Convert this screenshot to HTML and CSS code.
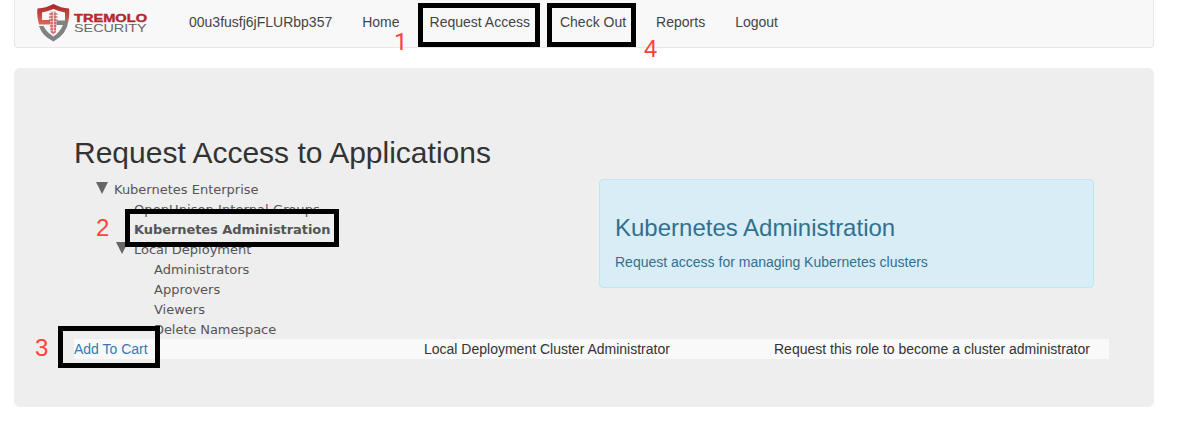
FILE: index.html
```html
<!DOCTYPE html>
<html lang="en">
<head>
<meta charset="utf-8">
<title>Request Access</title>
<link rel="stylesheet" href="styles.css">
</head>
<body>
<nav class="navbar">
  <a class="brand">
    <svg class="logo" width="112" height="42" viewBox="0 0 112 42">
      <defs>
        <linearGradient id="red" x1="0" y1="0" x2="0" y2="1"><stop offset="0" stop-color="#a8242a"/><stop offset="1" stop-color="#d96a55"/></linearGradient>
      </defs>
      <path d="M.5 5.500Q9 5 16.500 1Q24 5 32 5.500Q33 12 31 19H28V9.500Q22 8.500 16.500 6Q11 8.500 5 9.500V17H13V21.500H2Q-.5 13 .5 5.500Z" fill="url(#red)"/>
      <path d="M2 23H6.500Q9.500 29 16.500 33.500Q23 29 26 22H19.500V17.500H31.500Q30 31 16.500 38.500Q5 33 2 23Z" fill="#808284"/>
      <path d="M13.500 8.500H19V29L16.400 32L13.500 29Z" fill="#e6a59f"/>
      <path d="M12 11H20.500M12 14H20.500M12 17H20.500M13 20H19.500M13 23H19.500M13.500 26H19M14 29H18.500" stroke="#b93a3b" stroke-width="1.200"/>
      <path d="M16.400 9V29" stroke="#f4dfdc" stroke-width="1"/>
      <text class="logo-top" x="37" y="19" textLength="73" lengthAdjust="spacingAndGlyphs">TREMOLO</text>
      <text class="logo-bottom" x="37" y="28.800" textLength="72.500" lengthAdjust="spacingAndGlyphs">SECURITY</text>
    </svg>
  </a>
  <a class="link">00u3fusfj6jFLURbp357</a>
  <a class="link">Home</a>
  <a class="link">Request Access</a>
  <a class="link">Check Out</a>
  <a class="link">Reports</a>
  <a class="link">Logout</a>
</nav>
<main class="panel">
  <h2 class="title">Request Access to Applications</h2>
  <div class="content">
    <ul class="tree">
      <li class="node"><span class="arrow"></span><span>Kubernetes Enterprise</span></li>
      <li class="node level-1 wide">OpenUnison Internal Groups</li>
      <li class="node level-1 selected">Kubernetes Administration</li>
      <li class="node level-1"><span class="arrow"></span>Local Deployment</li>
      <li class="node level-2">Administrators</li>
      <li class="node level-2">Approvers</li>
      <li class="node level-2">Viewers</li>
      <li class="node level-2 narrow">Delete Namespace</li>
    </ul>
    <section class="info">
      <h3 class="info-title">Kubernetes Administration</h3>
      <p class="info-text">Request access for managing Kubernetes clusters</p>
    </section>
  </div>
  <div class="row">
    <a class="cart">Add To Cart</a>
    <span>Local Deployment Cluster Administrator</span>
    <span>Request this role to become a cluster administrator</span>
  </div>
</main>
<div class="frame frame-request"></div>
<div class="frame frame-checkout"></div>
<div class="frame frame-tree"></div>
<div class="frame frame-cart"></div>
<span class="step step-1">1</span>
<span class="step step-2">2</span>
<span class="step step-3">3</span>
<span class="step step-4">4</span>
</body>
</html>
```
FILE: styles.css
```css
* { box-sizing: border-box; }
body {
  margin: 0;
  padding: 0 27px 0 14px;
  height: 421px;
  overflow: hidden;
  position: relative;
  background: #fff;
  color: #333;
  font: 14px/20px "Liberation Sans", Arial, sans-serif;
}
.navbar {
  display: flex;
  height: 48px;
  background: #f8f8f8;
  border: 1px solid #e7e7e7;
  border-top: 0;
  border-radius: 0 0 4px 4px;
  padding-left: 22px;
}
.brand { width: 152px; padding-top: 3px; }
.logo { display: block; }
.logo-top { font: bold 11px "Liberation Sans", Arial, sans-serif; fill: #b5282c; stroke: #b5282c; stroke-width: .4px; }
.logo-bottom { font: 11px "Liberation Sans", Arial, sans-serif; fill: #666; }
.link { padding-top: 12px; margin-right: 30px; color: #444; white-space: nowrap; }
.panel {
  height: 339px;
  margin-top: 20px;
  padding: 68px 45px 0 60px;
  background: #eee;
  border-radius: 6px;
}
.title { margin: 0 0 10px; font-size: 30px; line-height: 33px; font-weight: 400; }
.content { display: flex; height: 160px; }
.tree {
  width: 525px;
  margin: 0;
  padding: 1px 0 0 40px;
  list-style: none;
  color: #555;
  font: 13px/20px "DejaVu Sans", Verdana, sans-serif;
}
.node { display: flex; height: 20px; }
.level-1 { padding-left: 20px; }
.level-2 { padding-left: 40px; }
.wide { letter-spacing: .08px; }
.narrow { letter-spacing: -.08px; }
.selected { font-weight: 700; letter-spacing: -.07px; }
.arrow {
  width: 12px;
  height: 12px;
  margin: 2px 6px 0 -18px;
  background: #666;
  clip-path: polygon(0 0, 100% 0, 50% 100%);
}
.info {
  width: 495px;
  height: 109px;
  padding: 15px;
  background: #d9edf7;
  border: 1px solid #bce8f1;
  border-radius: 4px;
  color: #31708f;
}
.info-title { margin: 20px 0 11px; font-size: 24px; line-height: 26px; font-weight: 400; }
.info-text { margin: 0; }
.row {
  display: grid;
  grid-template-columns: 350px 350px 1fr;
  height: 20px;
  background: #f9f9f9;
}
.cart { color: #337ab7; }
.frame { position: absolute; border: 5px solid #000; }
.frame-request { left: 418px; top: 3px; width: 122px; height: 44px; }
.frame-checkout { left: 547px; top: 3px; width: 89px; height: 44px; }
.frame-tree { left: 125px; top: 209px; width: 214px; height: 38px; }
.frame-cart { left: 58px; top: 326px; width: 102px; height: 42px; }
.step { position: absolute; color: #ff4338; font-size: 24px; line-height: 28px; }
.step-1 { left: 394px; top: 28px; font-family: Roboto, "Liberation Sans", sans-serif; }
.step-2 { left: 96px; top: 214px; }
.step-3 { left: 35px; top: 334px; }
.step-4 { left: 644px; top: 35px; }
```
